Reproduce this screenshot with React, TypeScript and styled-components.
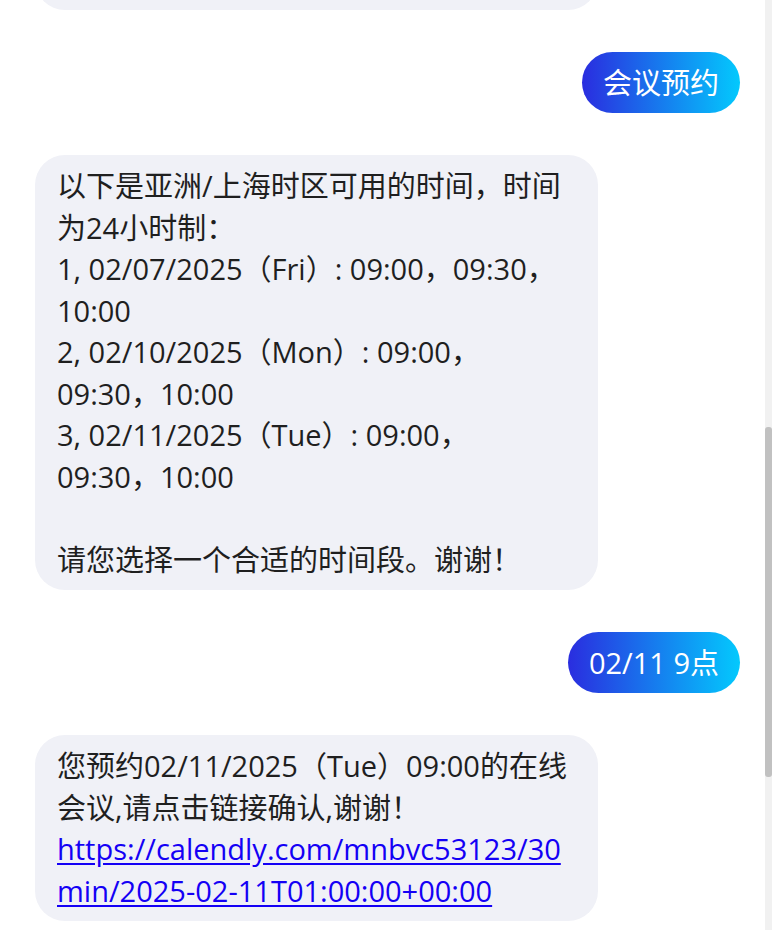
import React from "react";
import styled, { createGlobalStyle } from "styled-components";

const GlobalStyle = createGlobalStyle`
  html, body {
    margin: 0;
    padding: 0;
    background: #ffffff;
  }
  body {
    font-family: "Open Sans", "Noto Sans CJK SC", sans-serif;
  }
  * {
    box-sizing: border-box;
  }
`;

const Screen = styled.div`
  display: flex;
  height: 930px;
  background: #ffffff;
`;

const ChatColumn = styled.div`
  flex: 1;
  min-width: 0;
  overflow: hidden;
`;

const ScrollTrack = styled.div`
  width: 7px;
  flex: none;
  background: #f1f1f1;
  display: flex;
  flex-direction: column;
`;

const ScrollThumb = styled.div<{ $top: number; $size: number }>`
  margin-top: ${(p) => p.$top}px;
  height: ${(p) => p.$size}px;
  background: #c1c1c1;
  border-radius: 3px;
`;

const MessageList = styled.div`
  display: flex;
  flex-direction: column;
  gap: 42px;
  padding: 0 25px 0 35px;
`;

const Row = styled.div<{ $side: "bot" | "user" }>`
  display: flex;
  justify-content: ${(p) => (p.$side === "user" ? "flex-end" : "flex-start")};
`;

const BotBubble = styled.div`
  width: 563px;
  padding: 10px 21px 10px 22px;
  border-radius: 30px;
  background: #f0f1f7;
  color: #1f1f1f;
  font-size: 29px;
  line-height: 41.5px;
  white-space: pre-wrap;
  overflow-wrap: anywhere;
  text-spacing-trim: space-all;
`;

/* previous bot message, scrolled mostly out of view above the list */
const EarlierBubble = styled(BotBubble)`
  margin-top: -60px;
  height: 70px;
`;

const UserBubble = styled.div`
  padding: 10px 21px;
  border-radius: 31px;
  background: linear-gradient(90deg, #2a2ddf 0%, #03c9fd 100%);
  color: #ffffff;
  font-size: 29px;
  line-height: 41px;
  white-space: pre-wrap;
`;

const BubbleLink = styled.a`
  color: #1400f5;
  text-decoration: underline;
  text-underline-offset: 3px;
`;

type Message = { id: string; side: "bot" | "user"; text: React.ReactNode };

const messages: Message[] = [
  { id: "u1", side: "user", text: "会议预约" },
  {
    id: "b1",
    side: "bot",
    text:
      "以下是亚洲/上海时区可用的时间，时间\n为24小时制：\n" +
      "1, 02/07/2025（Fri）: 09:00，09:30，\n10:00\n" +
      "2, 02/10/2025（Mon）: 09:00，\n09:30，10:00\n" +
      "3, 02/11/2025（Tue）: 09:00，\n09:30，10:00\n" +
      "\n" +
      "请您选择一个合适的时间段。谢谢！",
  },
  { id: "u2", side: "user", text: "02/11 9点" },
  {
    id: "b2",
    side: "bot",
    text: (
      <>
        {"您预约02/11/2025（Tue）09:00的在线\n会议,请点击链接确认,谢谢！\n"}
        <BubbleLink href="#calendly">
          {"https://calendly.com/mnbvc53123/30\nmin/2025-02-11T01:00:00+00:00"}
        </BubbleLink>
      </>
    ),
  },
];

export default function App() {
  return (
    <>
      <GlobalStyle />
      <Screen>
        <ChatColumn>
          <MessageList>
            <Row $side="bot">
              <EarlierBubble aria-hidden="true" />
            </Row>
            {messages.map((m) => (
              <Row key={m.id} $side={m.side}>
                {m.side === "user" ? (
                  <UserBubble>{m.text}</UserBubble>
                ) : (
                  <BotBubble>{m.text}</BotBubble>
                )}
              </Row>
            ))}
          </MessageList>
        </ChatColumn>
        <ScrollTrack>
          <ScrollThumb $top={427} $size={350} />
        </ScrollTrack>
      </Screen>
    </>
  );
}
